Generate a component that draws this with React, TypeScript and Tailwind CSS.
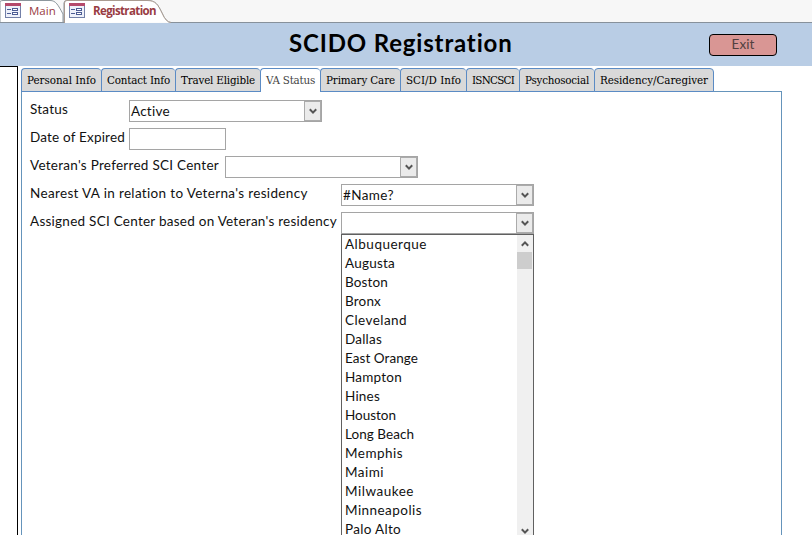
import { useLayoutEffect, useRef, useState } from "react";

/** Text whose tracking is adjusted so that it fills the given width. */
function Fit({ text, width, className = "" }: { text: string; width: number; className?: string }) {
  const ref = useRef<HTMLSpanElement>(null);
  const [spacing, setSpacing] = useState(0);
  useLayoutEffect(() => {
    if (ref.current) {
      const natural = ref.current.getBoundingClientRect().width;
      setSpacing((width - natural) / text.length);
    }
  }, [text, width]);
  return (
    <span ref={ref} className={`inline-block whitespace-pre ${className}`} style={{ letterSpacing: spacing }}>
      {text}
    </span>
  );
}

function FormIcon() {
  return (
    <svg width="16" height="15" viewBox="0 0 16 15" className="-mt-px shrink-0" shapeRendering="crispEdges">
      <rect x="0.5" y="0.5" width="15" height="14" fill="#eef1fa" stroke="#7380a8" />
      <rect x="0" y="0" width="16" height="3" fill="#b54a6c" />
      <path d="M2 6.5h4M2 10.5h4" stroke="#4c5c94" />
      <rect x="7.5" y="5.5" width="5" height="2" fill="#fff" stroke="#4c5c94" />
      <rect x="7.5" y="9.5" width="5" height="2" fill="#fff" stroke="#4c5c94" />
    </svg>
  );
}

function Chevron({ up = false }: { up?: boolean }) {
  return (
    <svg width="8" height="7" viewBox="0 0 8 7" className={up ? "rotate-180" : ""}>
      <path d="M.8 1.2 4 4.6 7.2 1.2" fill="none" stroke="#555" strokeWidth="2" />
    </svg>
  );
}

function Combo({ value, width }: { value?: string; width?: number }) {
  return (
    <div className="flex h-[22px] w-[193px] shrink-0 border border-[#a5a5a5] bg-white">
      <div className="flex-1 pl-[1px] leading-5">{value && <Fit text={value} width={width ?? 0} />}</div>
      <div className="flex w-[17px] items-center justify-center border border-[#ababab] bg-[#ebebeb]">
        <Chevron />
      </div>
    </div>
  );
}

const tabs: [string, string, number][] = [
  ["Personal Info", "w-[80px]", 69],
  ["Contact Info", "w-[74px]", 63],
  ["Travel Eligible", "w-[85px]", 74],
  ["VA Status", "w-[60px]", 49],
  ["Primary Care", "w-[80px]", 69],
  ["SCI/D Info", "w-[66px]", 55],
  ["ISNCSCI", "w-[53px]", 42],
  ["Psychosocial", "w-[75px]", 64],
  ["Residency/Caregiver", "w-[120px]", 108],
];

const centers: [string, number][] = [
  ["Albuquerque", 82],
  ["Augusta", 50],
  ["Boston", 43],
  ["Bronx", 36],
  ["Cleveland", 62],
  ["Dallas", 37],
  ["East Orange", 73],
  ["Hampton", 57],
  ["Hines", 35],
  ["Houston", 51],
  ["Long Beach", 69],
  ["Memphis", 58],
  ["Maimi", 39],
  ["Milwaukee", 69],
  ["Minneapolis", 77],
  ["Palo Alto", 56],
];

function Row({ label, width, box, children }: { label: string; width: number; box: string; children: React.ReactNode }) {
  return (
    <div className="flex h-7">
      <div className={`shrink-0 leading-[19px] ${box}`}>
        <Fit text={label} width={width} />
      </div>
      {children}
    </div>
  );
}

export default function App() {
  return (
    <div className="flex h-[535px] w-[812px] flex-col overflow-hidden bg-white font-[Lato,sans-serif] text-[13.5px] text-[#111]">
      <div className="relative h-[23px] shrink-0 bg-[#f7f7f7] font-['Open_Sans',sans-serif] text-[11.5px] text-[#993c43]">
        <svg width="812" height="23" className="absolute inset-0">
          <path d="M0 22.5V1.5Q1 .5 3 .5H50C56 .5 58 5 63 14V22.5" fill="#fff" stroke="#8c969c" />
          <path d="M0 22.5H64V3Q64 .5 67 .5H147C156 .5 158 5 162 13Q166 22.5 171 22.5H812" fill="none" stroke="#87919b" />
          <path d="M64.5 23V3Q64.5 .5 67 .5H147C156 .5 158 5 162 13Q166 22.5 171 22.5" fill="#fff" stroke="#a99b91" />
        </svg>
        <div className="relative flex h-[22px] items-center pl-[5px]">
          <FormIcon />
          <Fit text="Main" width={26} className="ml-2 w-[26px]" />
          <div className="ml-[14px] flex items-center">
            <FormIcon />
            <Fit text="Registration" width={63} className="ml-2 font-bold" />
          </div>
        </div>
      </div>

      <header className="flex h-[43px] shrink-0 items-center bg-[#b9cde5]">
        <div className="w-[709px] pl-[289px] leading-[41px]">
          <Fit text="SCIDO Registration" width={224} className="text-[24px] font-bold text-black" />
        </div>
        <button className="flex h-[22px] w-[68px] items-center justify-center rounded-[4px] border border-black bg-[#d99694] text-[#514040]">
          <Fit text="Exit" width={23} />
        </button>
      </header>

      <div className="flex flex-1">
        <div className="w-[18px] shrink-0 border-t border-r border-black" />
        <main className="ml-[3px] flex w-[761px] flex-col pt-[2px]">
          <nav className="z-10 flex h-6 font-['DejaVu_Serif_Condensed','DejaVu_Serif',serif] text-[11.5px]">
            {tabs.map(([name, box, width], i) => (
              <div
                key={name}
                className={`flex shrink-0 justify-center rounded-t-[4px] border-t border-l border-[#5b8bc4] leading-[23px] ${box} ${
                  i === 3 ? "bg-white text-[#444]" : "border-b bg-[#d9d9d9] text-black"
                } ${i === 8 ? "border-r" : ""}`}
              >
                <Fit text={name} width={width} />
              </div>
            ))}
          </nav>
          <section className="-mt-px flex-1 border border-b-0 border-[#6594bb] pt-2 pl-2">
            <Row label="Status" width={38} box="w-[99px]">
              <Combo value="Active" width={39} />
            </Row>
            <Row label="Date of Expired" width={95} box="w-[99px]">
              <div className="h-[22px] w-[97px] border border-[#a5a5a5]" />
            </Row>
            <Row label="Veteran's Preferred SCI Center" width={189} box="w-[195px]">
              <Combo />
            </Row>
            <Row label="Nearest VA in relation to Veterna's residency" width={278} box="w-[311px]">
              <Combo value="#Name?" width={51} />
            </Row>
            <Row label="Assigned SCI Center based on Veteran's residency" width={307} box="w-[311px]">
              <div className="relative">
                <Combo />
                <div className="absolute top-[22px] left-0 flex h-[301px] w-[193px] border border-b-0 border-[#606060] bg-white">
                  <ul className="flex-1 pl-[3px]">
                    {centers.map(([name, width]) => (
                      <li key={name} className="h-[19px] leading-[19px]">
                        <Fit text={name} width={width} />
                      </li>
                    ))}
                  </ul>
                  <div className="flex w-4 flex-col items-center bg-[#f0f0f0] pr-px">
                    <div className="flex h-[17px] items-center">
                      <Chevron up />
                    </div>
                    <div className="h-[17px] w-[15px] bg-[#cdcdcd]" />
                    <div className="mt-auto">
                      <Chevron />
                    </div>
                  </div>
                </div>
              </div>
            </Row>
          </section>
        </main>
      </div>
    </div>
  );
}
